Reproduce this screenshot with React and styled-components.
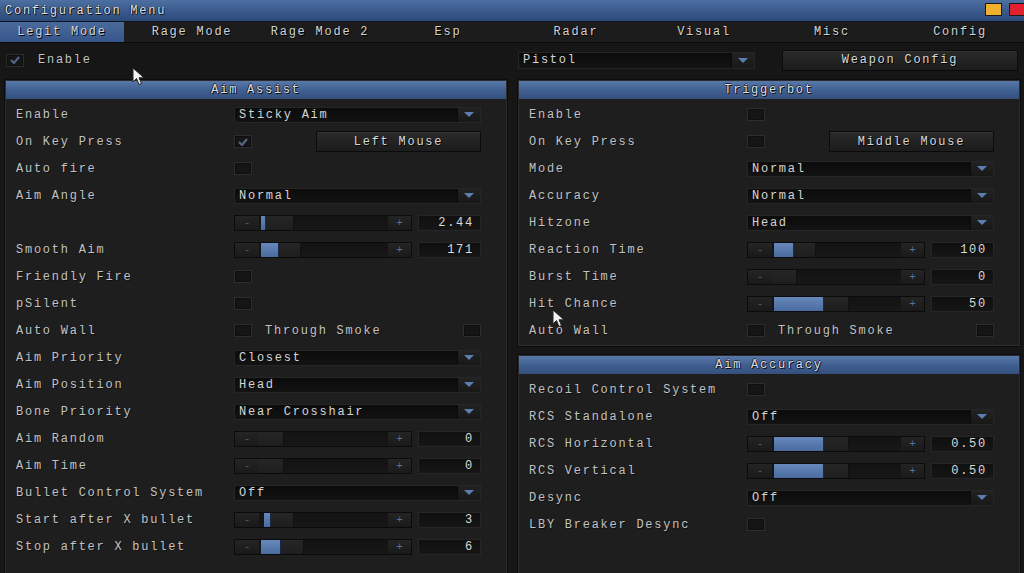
import React from 'react'
import styled, { createGlobalStyle, css } from 'styled-components'

const GlobalStyle = createGlobalStyle`
  html, body {
    margin: 0;
    padding: 0;
    background: #151515;
  }
  body {
    font-family: "Liberation Mono", "DejaVu Sans Mono", monospace;
    font-size: 12px;
    letter-spacing: 1.75px;
    color: #c9c9c9;
  }
  * {
    box-sizing: border-box;
  }
`

const Window = styled.div`
  position: relative;
  width: 1024px;
  height: 573px;
  overflow: hidden;
  background: #161616;
`

const TitleBar = styled.div`
  height: 22px;
  display: flex;
  align-items: center;
  justify-content: space-between;
  padding-left: 5px;
  background: linear-gradient(#4d6fa1, #38588a 60%, #2c4a78);
  border-bottom: 1px solid #0d1522;
`

const Title = styled.span`
  color: #dcdcdc;
  text-shadow: 1px 1px 0 #111, -1px 0 0 #1b2a44;
`

const WinButtons = styled.div`
  display: flex;
  gap: 7px;
  margin-right: -2px;
  margin-top: -2px;
`

const WinButton = styled.div`
  width: 17px;
  height: 13px;
  background: ${p => p.color};
  border: 1px solid #1a1a1a;
`

const TabBar = styled.div`
  display: grid;
  grid-template-columns: repeat(8, 1fr);
  height: 21px;
  background: #1c1c1c;
  border-bottom: 1px solid #0b0b0b;
`

const Tab = styled.div`
  display: flex;
  align-items: center;
  justify-content: center;
  color: #d2d2d2;
  text-shadow: 1px 1px 0 #000;
  ${p =>
    p.active &&
    css`
      width: calc(100% - 4px);
      background: linear-gradient(#4a6a9b, #36558a);
    `}
`

const Body = styled.div`
  padding: 6px 3px 0 5px;
`

const TopRow = styled.div`
  display: grid;
  grid-template-columns: 502px 502px;
  column-gap: 11px;
  height: 22px;
  align-items: center;
`

const TopLeft = styled.div`
  display: flex;
  align-items: center;
  gap: 14px;
  padding-left: 1px;
`

const TopRight = styled.div`
  display: flex;
  align-items: center;
  justify-content: space-between;
  padding-right: 2px;
`

const Columns = styled.div`
  display: grid;
  grid-template-columns: 502px 502px;
  column-gap: 11px;
  margin-top: 9px;
  height: 500px;
`

const RightCol = styled.div`
  display: flex;
  flex-direction: column;
  gap: 9px;
`

const PanelBox = styled.div`
  border: 1px solid #2c2c2c;
  outline: 1px solid #0c0c0c;
  background: #1e1e1e;
  ${p => p.grow && 'flex: 1;'}
  ${p => p.h && `height: ${p.h}px;`}
`

const PanelHeader = styled.div`
  height: 18px;
  display: flex;
  align-items: center;
  justify-content: center;
  background: linear-gradient(#5878a9, #3f5e90 55%, #344f7c);
  color: #dedede;
  text-shadow: 1px 1px 0 #0a0f18, -1px 0 0 #1d2c46, 0 -1px 0 #1d2c46;
`

const PanelBody = styled.div`
  padding: 2px 0 0 10px;
`

const Row = styled.div`
  display: grid;
  grid-template-columns: 218px 247px;
  align-items: center;
  height: 27px;
`

const Label = styled.span`
  color: #c2c2c2;
  white-space: nowrap;
  text-shadow: 1px 1px 0 rgba(0, 0, 0, 0.5);
`

const Control = styled.div`
  display: flex;
  align-items: center;
  gap: 5px;
`

const Box = styled.div`
  width: 18px;
  height: 13px;
  flex-shrink: 0;
  display: flex;
  align-items: center;
  justify-content: center;
  background: #151515;
  border: 1px solid #2d2d2d;
  box-shadow: inset 0 0 0 1px #0e0e0e;
`

const SelectBox = styled.div`
  width: ${p => p.w || 247}px;
  height: ${p => p.h || 16}px;
  display: flex;
  background: linear-gradient(#0b0b0b, #131313);
  border: 1px solid #262626;
`

const SelectText = styled.span`
  flex: 1;
  display: flex;
  align-items: center;
  padding-left: 4px;
  color: #d4d4d4;
`

const SelectArrow = styled.div`
  width: 23px;
  display: flex;
  align-items: center;
  justify-content: center;
  background: linear-gradient(#222, #181818);
  border-left: 1px solid #0a0a0a;
`

const Button = styled.div`
  width: ${p => p.w}px;
  height: 21px;
  margin-left: ${p => (p.push ? 'auto' : '0')};
  display: flex;
  align-items: center;
  justify-content: center;
  background: linear-gradient(#2a2a2a, #1c1c1c);
  border: 1px solid #0b0b0b;
  box-shadow: inset 0 1px 0 #333;
  color: #d6d6d6;
  text-shadow: 1px 1px 0 #000;
`

const SliderBox = styled.div`
  width: 178px;
  height: 16px;
  display: flex;
  background: #141414;
  border: 1px solid #0b0b0b;
`

const Step = styled.div`
  width: ${p => p.w}px;
  display: flex;
  align-items: center;
  justify-content: center;
  background: linear-gradient(#242424, #1a1a1a);
  color: ${p => p.tone};
  font-size: 11px;
  letter-spacing: 0;
`

const Track = styled.div`
  flex: 1;
  display: flex;
  background: linear-gradient(#131313, #171717);
`

const Fill = styled.div`
  background: linear-gradient(#6688bb, #4a6b9f);
  border-right: 1px solid #1a2a44;
`

const Segment = styled.div`
  background: linear-gradient(#262626, #1e1e1e);
  border-right: 1px solid #111;
`

const ValueBox = styled.div`
  width: 63px;
  height: 16px;
  margin-left: auto;
  display: flex;
  align-items: center;
  justify-content: flex-end;
  padding-right: 6px;
  background: linear-gradient(#0f0f0f, #161616);
  border: 1px solid #262626;
  color: #dadada;
`

const SideLabel = styled(Label)`
  margin-left: 8px;
`

const Pointer = styled.svg`
  position: absolute;
  left: ${p => p.x}px;
  top: ${p => p.y}px;
`

const Check = ({ checked }) => (
  <Box>
    {checked && (
      <svg width="12" height="10" viewBox="0 0 12 10">
        <polyline points="2,5 5,8 10,2" fill="none" stroke="#56678a" strokeWidth="2" />
      </svg>
    )}
  </Box>
)

const Select = ({ value, w, h }) => (
  <SelectBox w={w} h={h}>
    <SelectText>{value}</SelectText>
    <SelectArrow>
      <svg width="10" height="5" viewBox="0 0 10 5">
        <polygon points="0,0 10,0 5,5" fill="#5d7cb0" />
      </svg>
    </SelectArrow>
  </SelectBox>
)

const Slider = ({ value, offset, fill, seg }) => (
  <>
    <SliderBox>
      <Step w={24} tone="#4d5a72">-</Step>
      <Track>
        <div style={{ width: offset }} />
        {fill > 0 && <Fill style={{ width: fill }} />}
        <Segment style={{ width: seg }} />
      </Track>
      <Step w={23} tone="#4f6fa8">+</Step>
    </SliderBox>
    <ValueBox>{value}</ValueBox>
  </>
)

const Panel = ({ title, rows, grow, h }) => (
  <PanelBox grow={grow} h={h}>
    <PanelHeader>{title}</PanelHeader>
    <PanelBody>
      {rows.map((r, i) => (
        <Row key={i}>
          <Label>{r.label}</Label>
          <Control>{renderControl(r)}</Control>
        </Row>
      ))}
    </PanelBody>
  </PanelBox>
)

function renderControl(r) {
  switch (r.type) {
    case 'check':
      return <Check checked={r.checked} />
    case 'select':
      return <Select value={r.value} />
    case 'key':
      return (
        <>
          <Check checked={r.checked} />
          <Button w={165} push>
            {r.value}
          </Button>
        </>
      )
    case 'wall':
      return (
        <>
          <Check />
          <SideLabel>Through Smoke</SideLabel>
          <span style={{ marginLeft: 'auto' }}>
            <Check />
          </span>
        </>
      )
    case 'slider':
      return <Slider {...r} />
    default:
      return null
  }
}

const tabs = ['Legit Mode', 'Rage Mode', 'Rage Mode 2', 'Esp', 'Radar', 'Visual', 'Misc', 'Config']

const aimAssist = [
  { label: 'Enable', type: 'select', value: 'Sticky Aim' },
  { label: 'On Key Press', type: 'key', checked: true, value: 'Left Mouse' },
  { label: 'Auto fire', type: 'check' },
  { label: 'Aim Angle', type: 'select', value: 'Normal' },
  { label: '', type: 'slider', value: '2.44', offset: 2, fill: 5, seg: 28 },
  { label: 'Smooth Aim', type: 'slider', value: '171', offset: 2, fill: 18, seg: 22 },
  { label: 'Friendly Fire', type: 'check' },
  { label: 'pSilent', type: 'check' },
  { label: 'Auto Wall', type: 'wall' },
  { label: 'Aim Priority', type: 'select', value: 'Closest' },
  { label: 'Aim Position', type: 'select', value: 'Head' },
  { label: 'Bone Priority', type: 'select', value: 'Near Crosshair' },
  { label: 'Aim Random', type: 'slider', value: '0', offset: 0, fill: 0, seg: 25 },
  { label: 'Aim Time', type: 'slider', value: '0', offset: 0, fill: 0, seg: 25 },
  { label: 'Bullet Control System', type: 'select', value: 'Off' },
  { label: 'Start after X bullet', type: 'slider', value: '3', offset: 5, fill: 7, seg: 23 },
  { label: 'Stop after X bullet', type: 'slider', value: '6', offset: 2, fill: 20, seg: 23 },
]

const triggerbot = [
  { label: 'Enable', type: 'check' },
  { label: 'On Key Press', type: 'key', value: 'Middle Mouse' },
  { label: 'Mode', type: 'select', value: 'Normal' },
  { label: 'Accuracy', type: 'select', value: 'Normal' },
  { label: 'Hitzone', type: 'select', value: 'Head' },
  { label: 'Reaction Time', type: 'slider', value: '100', offset: 2, fill: 20, seg: 22 },
  { label: 'Burst Time', type: 'slider', value: '0', offset: 0, fill: 0, seg: 25 },
  { label: 'Hit Chance', type: 'slider', value: '50', offset: 2, fill: 50, seg: 25 },
  { label: 'Auto Wall', type: 'wall' },
]

const aimAccuracy = [
  { label: 'Recoil Control System', type: 'check' },
  { label: 'RCS Standalone', type: 'select', value: 'Off' },
  { label: 'RCS Horizontal', type: 'slider', value: '0.50', offset: 2, fill: 50, seg: 25 },
  { label: 'RCS Vertical', type: 'slider', value: '0.50', offset: 2, fill: 50, seg: 25 },
  { label: 'Desync', type: 'select', value: 'Off' },
  { label: 'LBY Breaker Desync', type: 'check' },
]

const Arrow = ({ x, y }) => (
  <Pointer x={x} y={y} width="14" height="20" viewBox="0 0 14 20">
    <path d="M1 1 L1 15 L4.5 11.5 L7 17.5 L9.5 16.5 L7 10.8 L12 10.8 Z" fill="#f2f2f2" stroke="#222" strokeWidth="1" />
  </Pointer>
)

export default function App() {
  return (
    <Window>
      <GlobalStyle />
      <TitleBar>
        <Title>Configuration Menu</Title>
        <WinButtons>
          <WinButton color="#f0b12e" />
          <WinButton color="#e3202e" />
        </WinButtons>
      </TitleBar>
      <TabBar>
        {tabs.map((t, i) => (
          <Tab key={t} active={i === 0}>
            {t}
          </Tab>
        ))}
      </TabBar>
      <Body>
        <TopRow>
          <TopLeft>
            <Check checked />
            <Label>Enable</Label>
          </TopLeft>
          <TopRight>
            <Select value="Pistol" w={237} h={17} />
            <Button w={236}>Weapon Config</Button>
          </TopRight>
        </TopRow>
        <Columns>
          <Panel title="Aim Assist" rows={aimAssist} />
          <RightCol>
            <Panel title="Triggerbot" rows={triggerbot} h={266} />
            <Panel title="Aim Accuracy" rows={aimAccuracy} grow />
          </RightCol>
        </Columns>
      </Body>
      <Arrow x={132} y={67} />
      <Arrow x={552} y={309} />
    </Window>
  )
}
